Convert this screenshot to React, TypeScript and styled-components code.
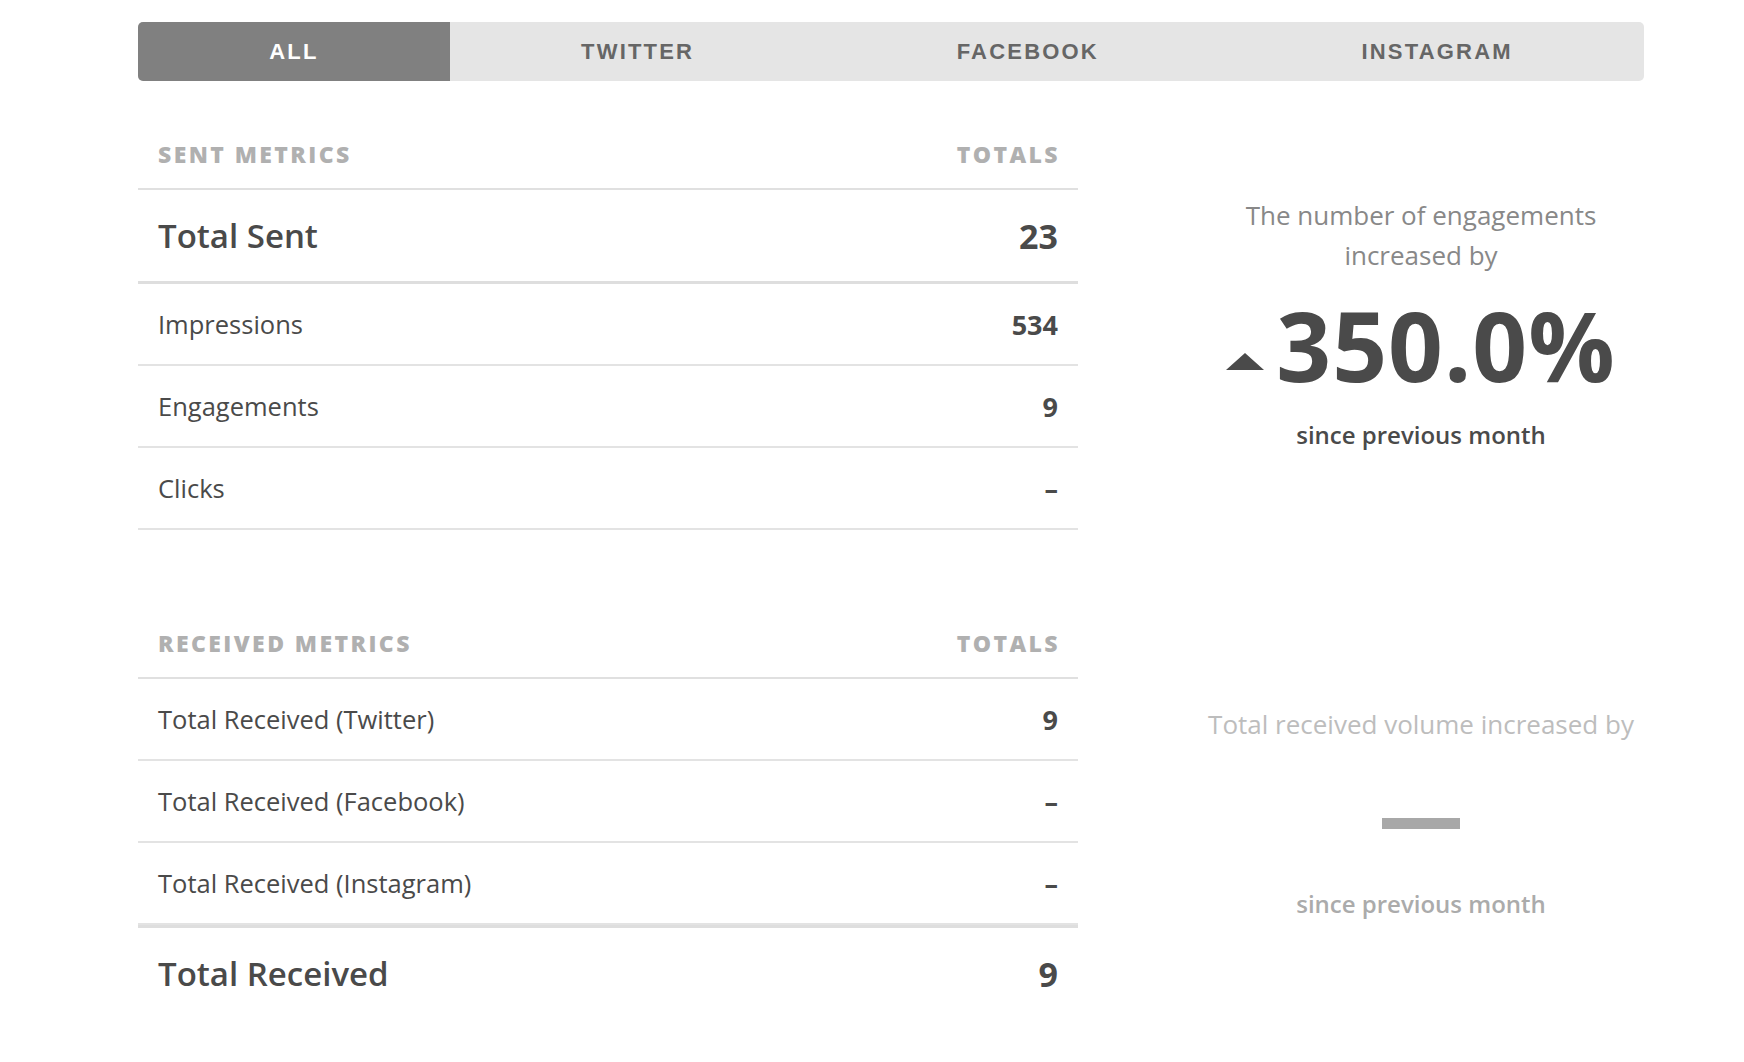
import * as React from "react";
import styled, { createGlobalStyle } from "styled-components";

const GlobalStyle = createGlobalStyle`
  html, body {
    margin: 0;
    padding: 0;
    background: #ffffff;
  }
  body {
    font-family: "Open Sans", Lato, sans-serif;
    color: #4a4a4a;
  }
  * {
    box-sizing: border-box;
  }
`;

const SPage = styled.div`
  width: 1744px;
  padding: 22px 100px 40px 138px;
`;

const STabBar = styled.div`
  display: flex;
  height: 59px;
  border-radius: 5px;
  overflow: hidden;
  background-color: #e5e5e5;
`;

const STab = styled.div<{ active: boolean }>`
  flex: 1 1 auto;
  display: flex;
  align-items: center;
  justify-content: center;
  background-color: ${({ active }) => (active ? "#808080" : "transparent")};
  color: ${({ active }) => (active ? "#ffffff" : "#666666")};
  font-family: "Liberation Sans", Arial, sans-serif;
  font-weight: 700;
  font-size: 22px;
  letter-spacing: 2.2px;
  text-transform: uppercase;
  cursor: pointer;
`;

const SSection = styled.section<{ first?: boolean }>`
  display: flex;
  align-items: center;
  margin-top: ${({ first }) => (first ? "39px" : "79px")};
`;

const STable = styled.div`
  width: 940px;
  flex: none;
`;

const SHeader = styled.div`
  display: flex;
  justify-content: space-between;
  align-items: center;
  height: 70px;
  padding: 0 20px;
  border-bottom: 2px solid #e0e0e0;
  font-weight: 800;
  font-size: 23px;
  letter-spacing: 2.4px;
  text-transform: uppercase;
  color: #b0b0b0;

  & > span:last-child {
    margin-right: -2px;
  }
`;

const SRow = styled.div<{ total?: "top" | "bottom" }>`
  display: flex;
  justify-content: space-between;
  align-items: center;
  height: ${({ total }) => (total ? "94px" : "82px")};
  padding: 0 20px;
  border-bottom: ${({ total }) =>
    total === "top" ? "3px solid #dedede" : total === "bottom" ? "none" : "2px solid #e3e3e3"};
  border-top: ${({ total }) => (total === "bottom" ? "3px solid #dedede" : "none")};
  font-size: ${({ total }) => (total ? "33px" : "25.5px")};
  font-weight: ${({ total }) => (total ? 600 : 400)};
  color: #4a4a4a;
`;

const SValue = styled.span<{ large?: boolean }>`
  font-weight: 700;
  font-size: ${({ large }) => (large ? "34px" : "27px")};
`;

const SSummary = styled.div`
  flex: 1;
  margin-left: 120px;
  display: flex;
  flex-direction: column;
  align-items: center;
  text-align: center;
`;

const SCaption = styled.div<{ muted?: boolean }>`
  font-size: 26px;
  line-height: 40px;
  white-space: nowrap;
  color: ${({ muted }) => (muted ? "#bdbdbd" : "#888888")};
`;

const SChange = styled.div`
  display: flex;
  align-items: center;
  justify-content: center;
  height: 96px;
  margin: 22px 0;
`;

const SArrow = styled.span`
  align-self: flex-end;
  width: 0;
  height: 0;
  margin: 0 12px 23px 0;
  border-left: 19px solid transparent;
  border-right: 19px solid transparent;
  border-bottom: 17px solid #4a4a4a;
`;

const SPercent = styled.span`
  font-size: 96px;
  font-weight: 700;
  line-height: 1;
  letter-spacing: 1px;
  color: #4a4a4a;
`;

const SDash = styled.span`
  display: block;
  width: 78px;
  height: 11px;
  margin-top: 18px;
  background-color: #a8a8a8;
`;

const SSince = styled.div<{ muted?: boolean }>`
  font-size: 24px;
  line-height: 40px;
  font-weight: 600;
  color: ${({ muted }) => (muted ? "#ababab" : "#4a4a4a")};
`;

const TABS = ["All", "Twitter", "Facebook", "Instagram"];

const SENT = [
  { label: "Impressions", value: "534" },
  { label: "Engagements", value: "9" },
  { label: "Clicks", value: "–" }
];

const RECEIVED = [
  { label: "Total Received (Twitter)", value: "9" },
  { label: "Total Received (Facebook)", value: "–" },
  { label: "Total Received (Instagram)", value: "–" }
];

export default function App() {
  const [tab, setTab] = React.useState("All");

  return (
    <>
      <GlobalStyle />
      <SPage>
        <STabBar>
          {TABS.map(t => (
            <STab key={t} active={t === tab} onClick={() => setTab(t)}>
              {t}
            </STab>
          ))}
        </STabBar>

        <SSection first>
          <STable>
            <SHeader>
              <span>Sent Metrics</span>
              <span>Totals</span>
            </SHeader>
            <SRow total="top">
              <span>Total Sent</span>
              <SValue large>23</SValue>
            </SRow>
            {SENT.map(r => (
              <SRow key={r.label}>
                <span>{r.label}</span>
                <SValue>{r.value}</SValue>
              </SRow>
            ))}
          </STable>
          <SSummary>
            <SCaption>
              The number of engagements
              <br />
              increased by
            </SCaption>
            <SChange>
              <SArrow />
              <SPercent>350.0%</SPercent>
            </SChange>
            <SSince>since previous month</SSince>
          </SSummary>
        </SSection>

        <SSection>
          <STable>
            <SHeader>
              <span>Received Metrics</span>
              <span>Totals</span>
            </SHeader>
            {RECEIVED.map(r => (
              <SRow key={r.label}>
                <span>{r.label}</span>
                <SValue>{r.value}</SValue>
              </SRow>
            ))}
            <SRow total="bottom">
              <span>Total Received</span>
              <SValue large>9</SValue>
            </SRow>
          </STable>
          <SSummary>
            <SCaption muted>Total received volume increased by</SCaption>
            <SChange>
              <SDash />
            </SChange>
            <SSince muted>since previous month</SSince>
          </SSummary>
        </SSection>
      </SPage>
    </>
  );
}
